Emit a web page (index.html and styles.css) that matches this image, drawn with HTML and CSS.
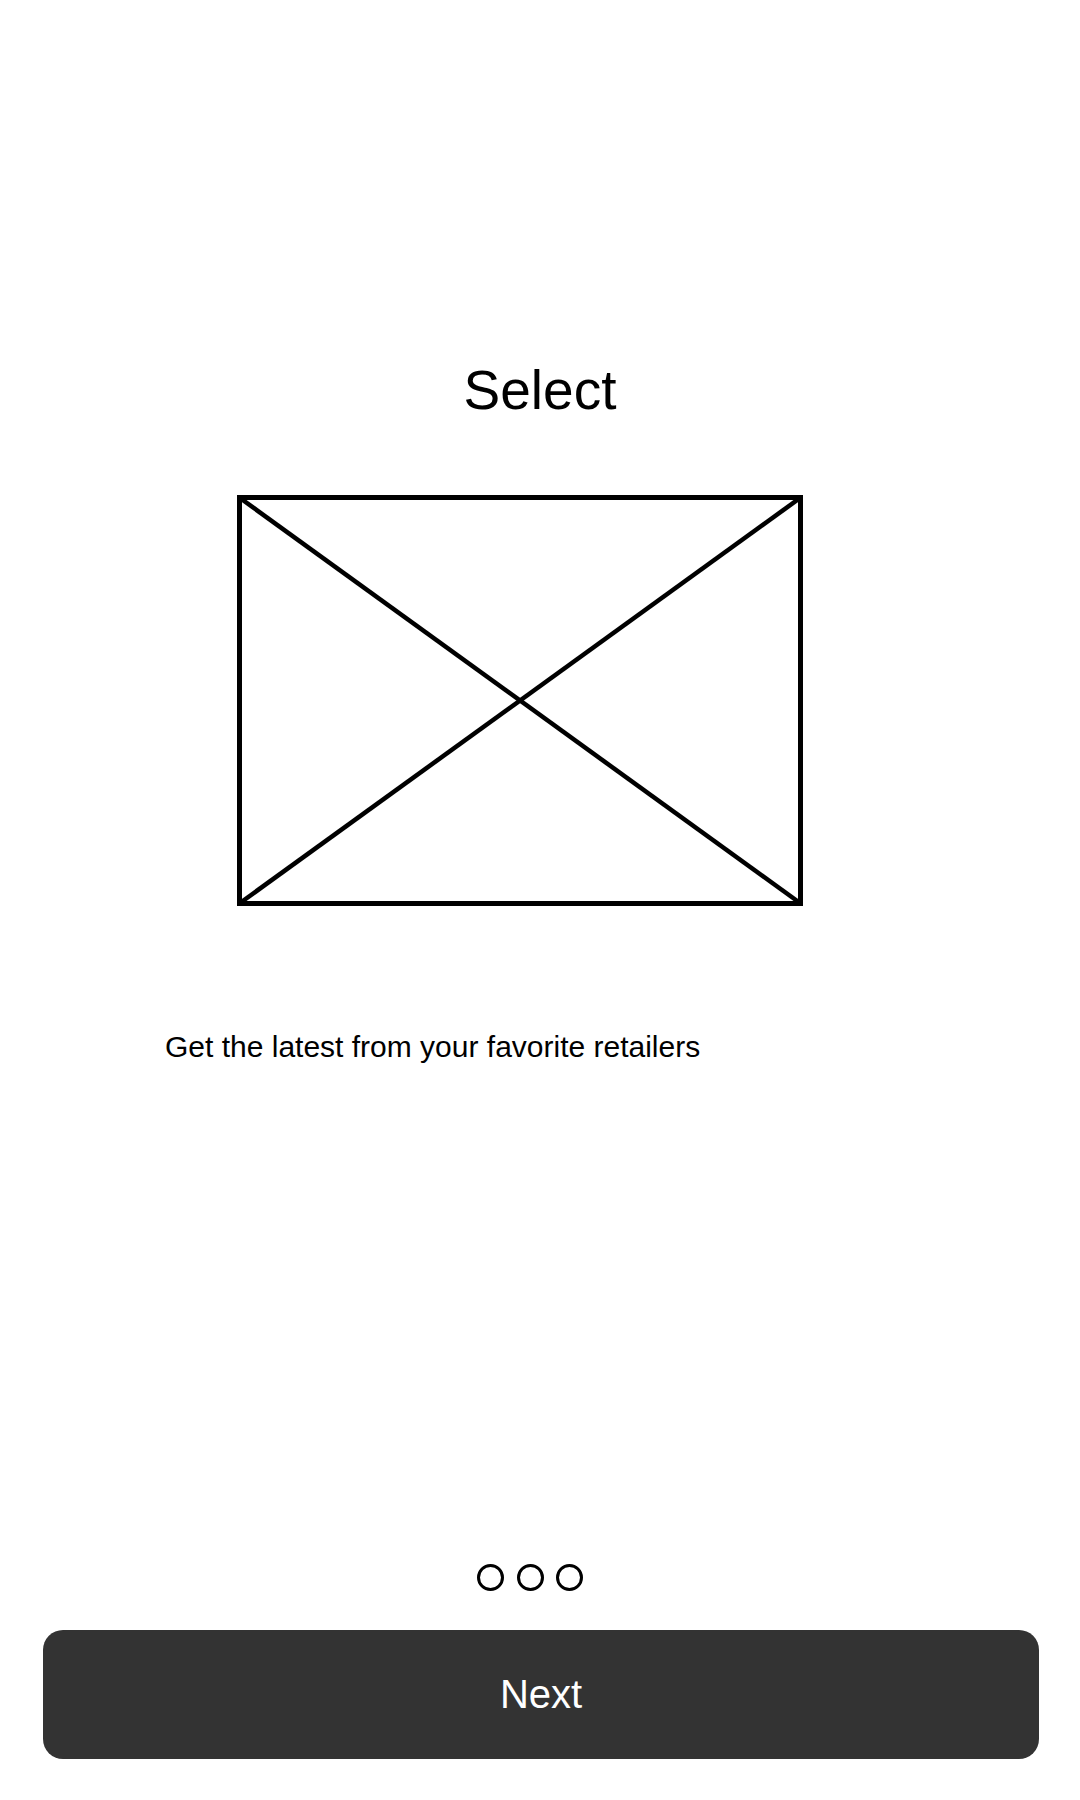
FILE: index.html
```html
<!DOCTYPE html>
<html>
<head>
<meta charset="utf-8">
<link rel="stylesheet" href="styles.css">
</head>
<body>
<main class="screen">
  <h1 class="title">Select</h1>
  <div class="placeholder">
    <svg width="566" height="411" viewBox="0 0 566 411">
      <rect x="2.5" y="2.5" width="561" height="406" fill="none" stroke="#000" stroke-width="5"/>
      <line x1="3" y1="3" x2="563" y2="408" stroke="#000" stroke-width="4.5"/>
      <line x1="563" y1="3" x2="3" y2="408" stroke="#000" stroke-width="4.5"/>
    </svg>
  </div>
  <p class="caption">Get the latest from your favorite retailers</p>
  <div class="dots">
    <span class="dot"></span>
    <span class="dot"></span>
    <span class="dot"></span>
  </div>
  <button class="next">Next</button>
</main>
</body>
</html>
```
FILE: styles.css
```css
html, body {
  margin: 0;
  padding: 0;
  background: #fff;
}
.screen {
  width: 1080px;
  height: 1800px;
  display: flex;
  flex-direction: column;
  font-family: "Liberation Sans", Arial, sans-serif;
  color: #000;
}
.title {
  margin: 363.4px 0 0 0;
  font-size: 55px;
  line-height: 55px;
  font-weight: normal;
  text-align: center;
}
.placeholder {
  margin: 76.6px 0 0 237px;
  width: 566px;
  height: 411px;
}
.placeholder svg {
  display: block;
}
.caption {
  margin: 126.3px 0 0 165px;
  font-size: 30px;
  line-height: 30px;
}
.dots {
  margin: 501.7px 0 0 477px;
  display: flex;
  gap: 12.5px;
}
.dot {
  width: 27px;
  height: 27px;
  box-sizing: border-box;
  border: 3px solid #000;
  border-radius: 50%;
}
.next {
  margin: 39px 0 0 43px;
  width: 996px;
  height: 129px;
  border: none;
  border-radius: 20px;
  background: #333333;
  color: #fff;
  font-family: "Liberation Sans", Arial, sans-serif;
  font-size: 40px;
  line-height: 40px;
  padding: 0;
}
```
